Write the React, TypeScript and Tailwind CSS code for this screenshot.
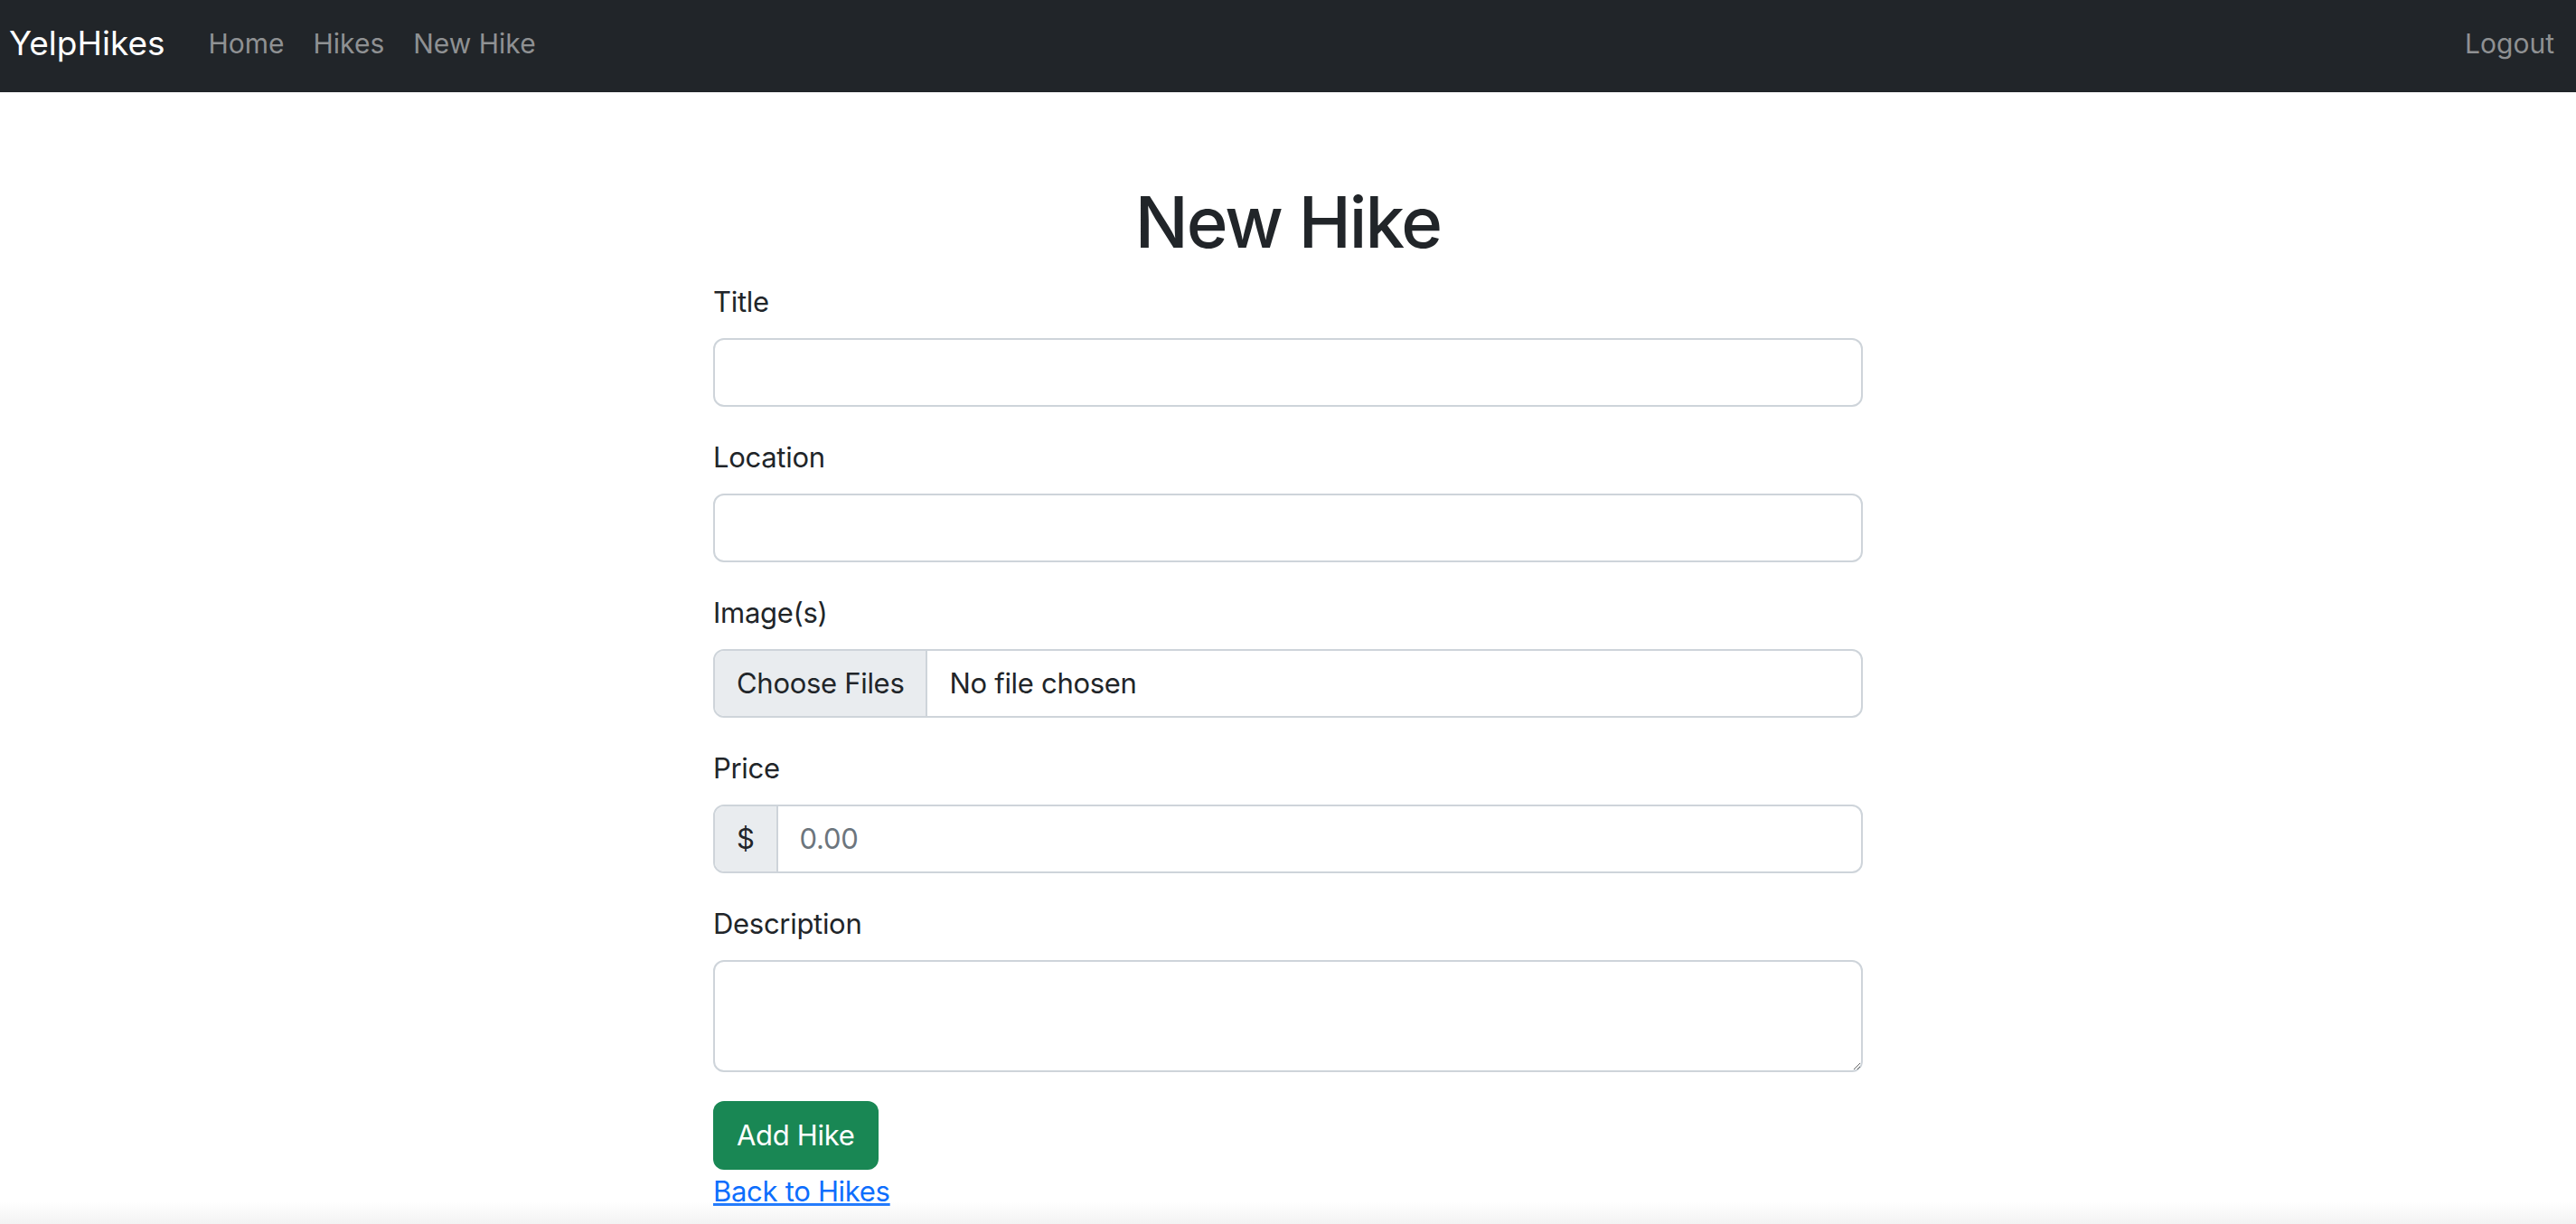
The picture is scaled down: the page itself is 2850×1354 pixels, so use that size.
import React from 'react'

const inputCls =
  "block w-full h-[76px] rounded-[12px] border-2 border-[#ced4da] bg-white px-[24px] text-[31px] leading-[48px] text-[#212529] outline-none"

function Field({ label, children }: { label: string; children: React.ReactNode }) {
  return (
    <div className="mb-[32px]">
      <label className="mb-[16px] block text-[31px] leading-[48px]">{label}</label>
      {children}
    </div>
  )
}

export default function App() {
  return (
    <div className="relative min-h-screen bg-white font-['Inter',sans-serif] tracking-[-0.3px] text-[#212529]">
      <nav className="flex h-[102px] items-center bg-[#212529] pb-[6px] pl-[10px] pr-[24px] tracking-normal">
        <a href="#" className="mr-[32px] text-[37px] leading-[60px] text-white">YelpHikes</a>
        <div className="flex">
          <a href="#" className="px-[16px] text-[30px] text-[#8f9193]">Home</a>
          <a href="#" className="px-[16px] text-[30px] text-[#8f9193]">Hikes</a>
          <a href="#" className="px-[16px] text-[30px] text-[#8f9193]">New Hike</a>
        </div>
        <a href="#" className="ml-auto text-[30px] text-[#8f9193]">Logout</a>
      </nav>

      <main className="mx-auto w-[1272px] pt-[96px]">
        <h1 className="mb-[16px] text-center text-[78px] font-medium leading-[96px] tracking-[-2px]">New Hike</h1>
        <form>
          <Field label="Title">
            <input className={inputCls} />
          </Field>
          <Field label="Location">
            <input className={inputCls} />
          </Field>
          <Field label="Image(s)">
            <div className="flex h-[76px] w-full overflow-hidden rounded-[12px] border-2 border-[#ced4da] text-[31px]">
              <span className="flex items-center border-r-2 border-[#ced4da] bg-[#e9ecef] px-[24px]">Choose Files</span>
              <span className="flex items-center pl-[24px]">No file chosen</span>
            </div>
          </Field>
          <Field label="Price">
            <div className="flex h-[76px] w-full overflow-hidden rounded-[12px] border-2 border-[#ced4da] text-[31px]">
              <span className="flex items-center border-r-2 border-[#ced4da] bg-[#e9ecef] px-[24px]">$</span>
              <input placeholder="0.00" className="min-w-0 flex-1 px-[24px] text-[31px] outline-none placeholder:text-[#6c757d]" />
            </div>
          </Field>
          <Field label="Description">
            <textarea className="block h-[124px] w-full rounded-[12px] border-2 border-[#ced4da] px-[24px] py-[12px] text-[31px] outline-none" />
          </Field>
          <button type="button" className="h-[76px] rounded-[12px] bg-[#198754] px-[26px] text-[31px] text-white">Add Hike</button>
        </form>
        <a href="#" className="block text-[31px] leading-[48px] text-[#0d6efd] underline">Back to Hikes</a>
      </main>

      <div className="pointer-events-none absolute bottom-0 left-0 h-[24px] w-full bg-linear-to-b from-transparent to-[#f3f3f3]" />
    </div>
  )
}
